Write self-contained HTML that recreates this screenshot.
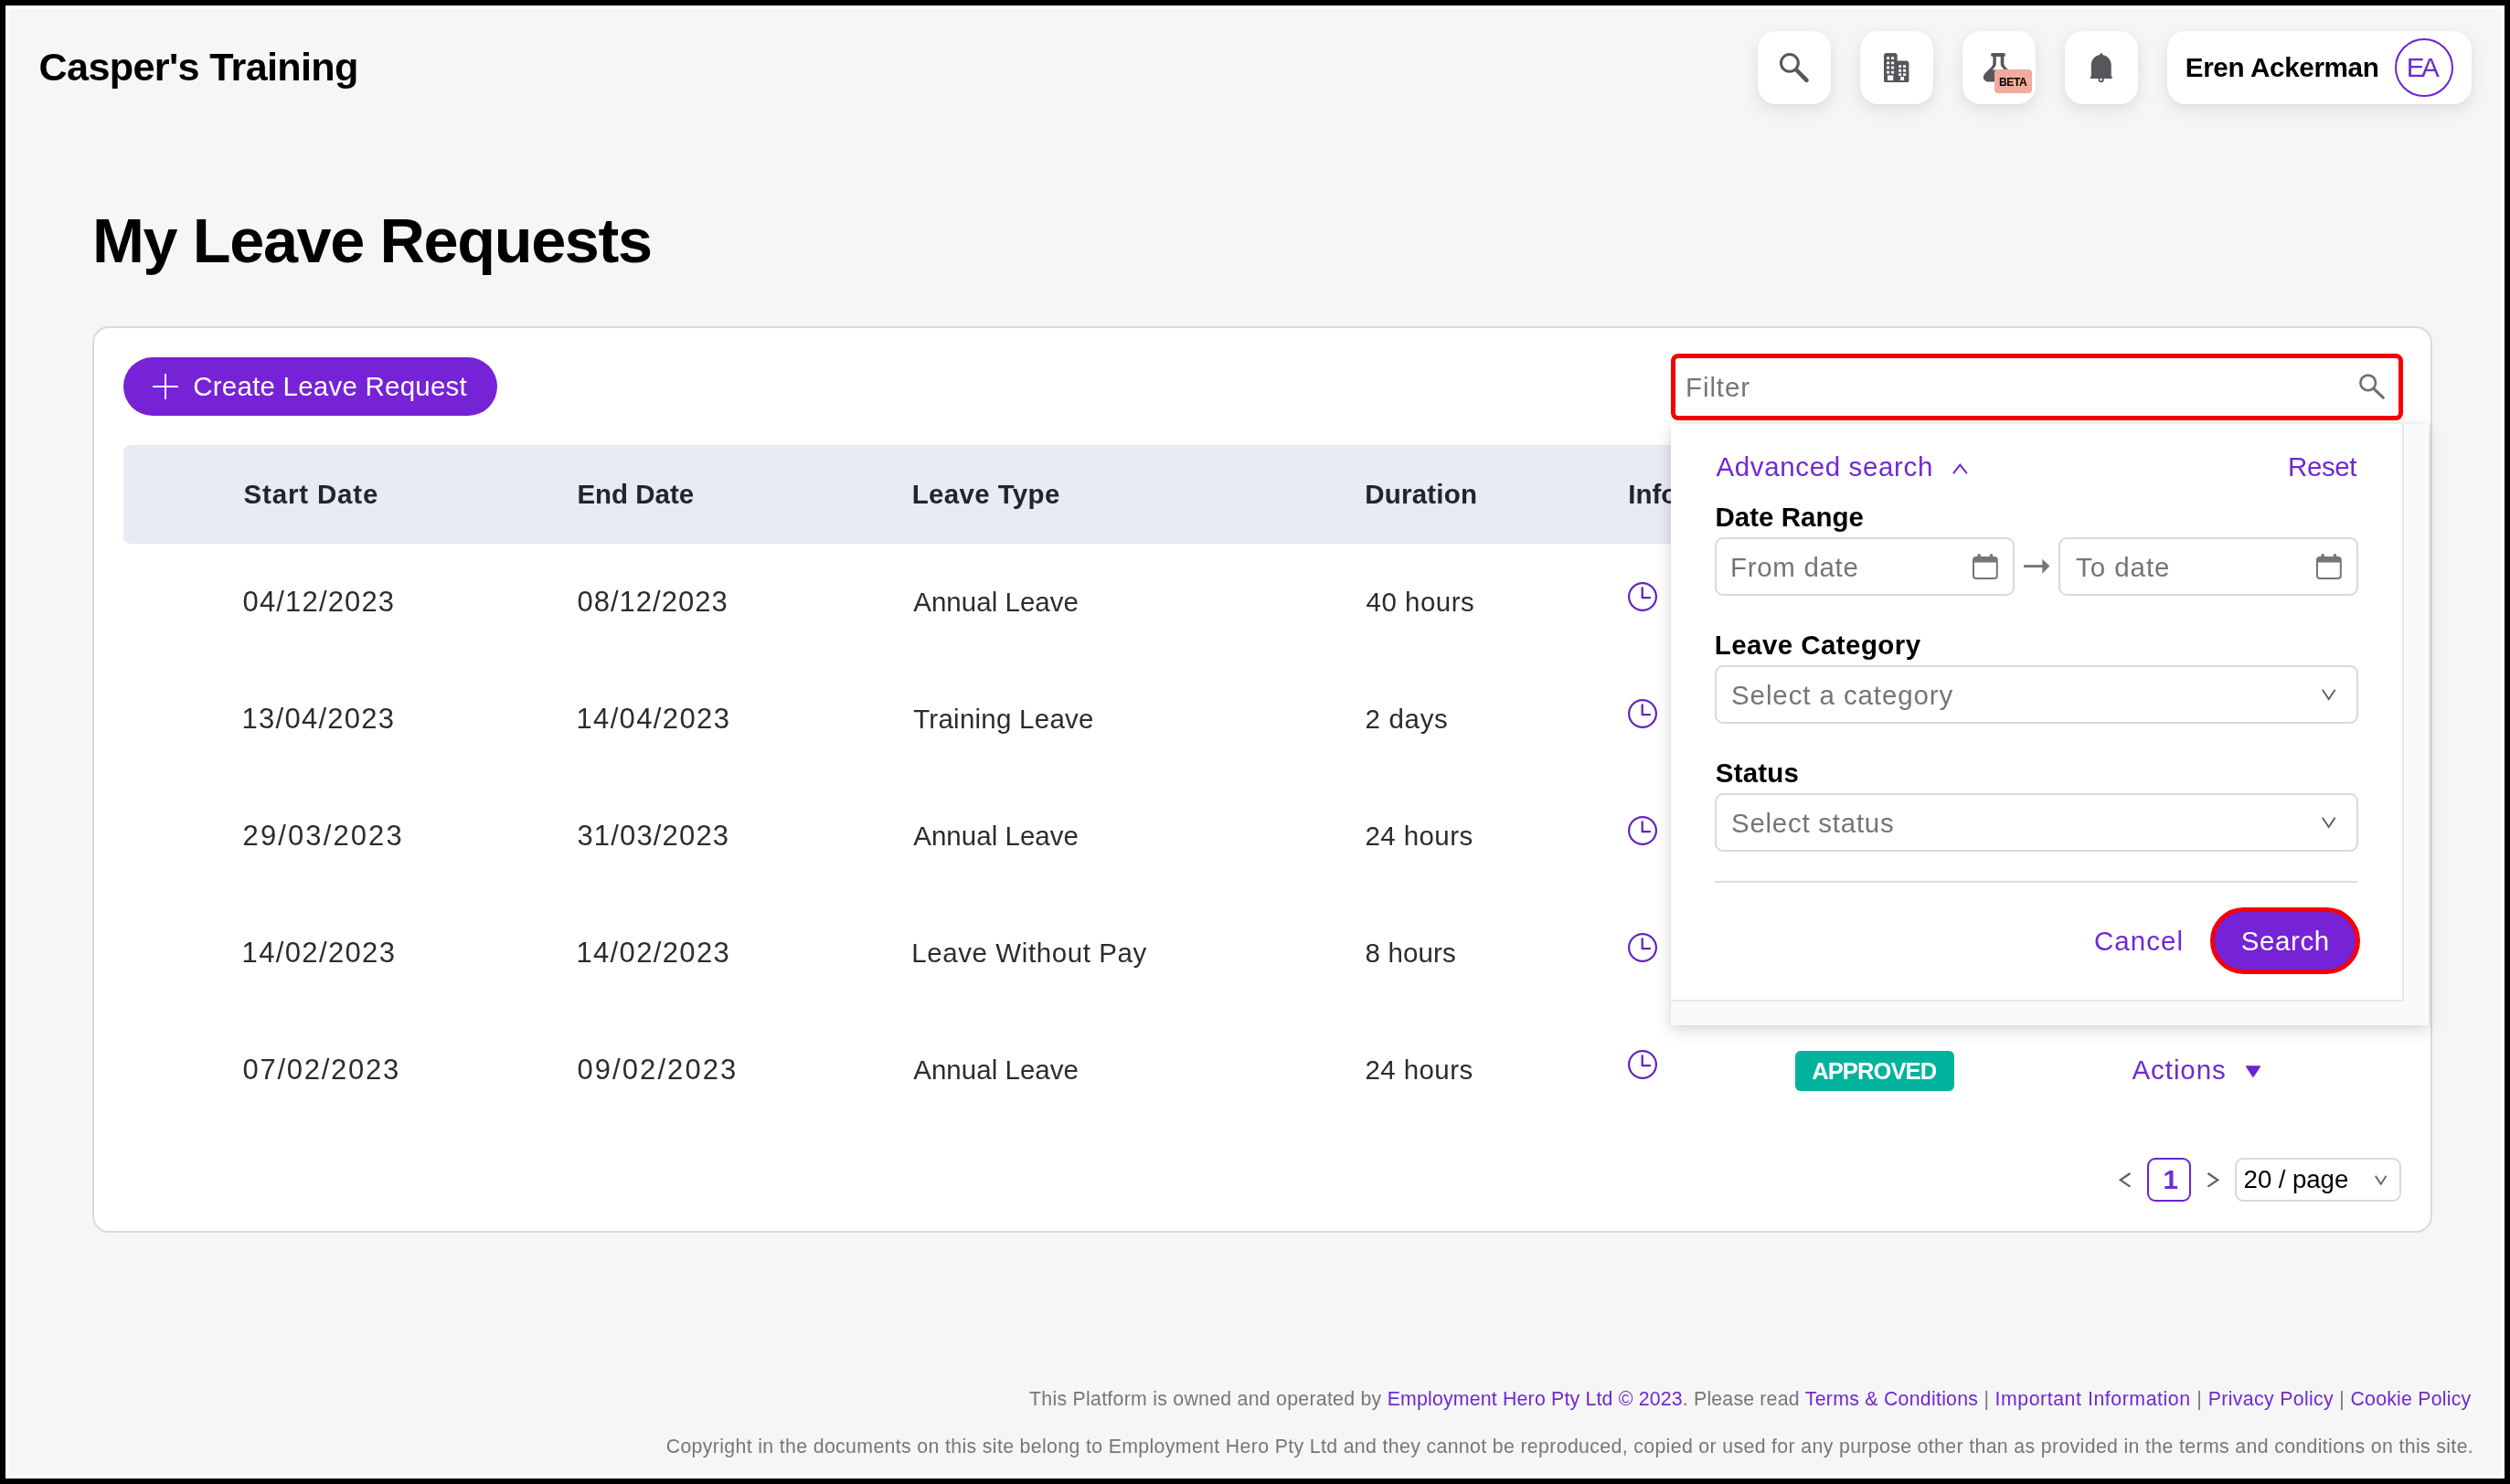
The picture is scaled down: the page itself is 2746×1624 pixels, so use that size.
<!DOCTYPE html>
<html lang="en">
<head>
<meta charset="utf-8">
<title>My Leave Requests</title>
<style>
*{box-sizing:border-box;margin:0;padding:0}
html,body{width:2746px;height:1624px;overflow:hidden;background:#000}
body{position:relative;font-family:"Liberation Sans",Arial,sans-serif;color:#000}
.frame{position:absolute;left:6px;top:6px;width:2734px;height:1612px;background:#fff}
.page{position:absolute;left:10px;top:10px;width:2726px;height:1604px;background:#f6f6f6}
.abs,.layer{position:absolute}
.layer{left:0;top:0;width:0;height:0}
header.layer,main.layer,footer.layer{will-change:transform}
.t{position:absolute;white-space:nowrap;line-height:1;font-weight:400;margin:0;font-family:"Liberation Sans",Arial,sans-serif}
a{text-decoration:none}
svg{position:absolute;overflow:visible}
.hbtn{position:absolute;top:34px;width:80px;height:80px;border-radius:20px;background:#fff;box-shadow:0 6px 18px rgba(0,0,0,.10),0 1px 3px rgba(0,0,0,.04)}
.card{position:absolute;left:101px;top:357px;width:2560px;height:992px;background:#fff;border:2px solid #d8dadd;border-radius:18px}
.thead{position:absolute;left:135px;top:487px;width:2491px;height:108px;background:#e7ebf2;border-radius:8px}
.pill{position:absolute;border-radius:999px;background:#7622d7}
.inp{position:absolute;background:#fff;border:2px solid #d8d9de;border-radius:9px}
</style>
</head>
<body>
<div class="frame"></div>
<div class="page"></div>

<header class="layer">
  <div class="t" style="left:42.60px;top:52.20px;font-size:43.2px;letter-spacing:-0.681px;color:#000;font-weight:700;">Casper's Training</div>
  <nav class="layer">
    <button class="hbtn" style="left:1923px;border:0" aria-label="Search"></button>
    <svg style="left:1947px;top:58px" width="32" height="32" viewBox="0 0 32 32"><circle cx="10.9" cy="10.9" r="9.4" fill="none" stroke="#56575b" stroke-width="3"/><line x1="18.8" y1="19" x2="29.5" y2="29.8" stroke="#56575b" stroke-width="4.6" stroke-linecap="round"/></svg>
    <button class="hbtn" style="left:2035px;border:0" aria-label="Organisation"></button>
    <svg style="left:2061px;top:58px" width="28" height="32" viewBox="0 0 28 32"><path fill="#56575b" fill-rule="evenodd" d="M3 0H11.7A3 3 0 0 1 14.7 3V8.5H24.4A3 3 0 0 1 27.4 11.500V30.500A1.500 1.500 0 0 1 25.900 32H1.500A1.500 1.500 0 0 1 0 30.500V3A3 3 0 0 1 3 0Z
M3.100 4.300h3v2.800h-3z M8.100 4.300h3v2.800h-3z M3.100 9.400h3v2.800h-3z M8.100 9.400h3v2.800h-3z M3.100 14.600h3v2.800h-3z M8.100 14.600h3v2.800h-3z M3.100 19.700h3v2.800h-3z M8.100 19.700h3v2.800h-3z M4 24.400h6.200v5.500h-6.200z
M16.200 13.300h2.900v2.800h-2.900z M21.100 13.300h3v2.800h-3z M16.200 17.800h2.900v2.900h-2.900z M21.100 17.800h3v2.900h-3z M16.200 22.200h2.900v2.900h-2.900z M21.100 22.200h3v2.900h-3z M18.100 26h4v4h-4z"/></svg>
    <button class="hbtn" style="left:2147px;border:0" aria-label="Beta features"></button>
    <svg style="left:2170px;top:58px" width="32" height="32" viewBox="0 0 32 32"><path fill="#56575b" d="M10.050 0H21.950A2.050 2.050 0 0 1 21.950 4.100H22.300V11C22.300 13.500 23.500 14.800 25.500 16.800L31 22.200C33.500 24.800 33.200 28 31.500 29.800C30.300 31.100 28.800 31.600 27 31.600H5.700C3.900 31.600 2.400 31.100 1.200 29.800C-0.500 28 -0.800 24.800 1.700 22.200L7.200 16.800C9.200 14.800 10.400 13.500 10.400 11V4.100H10.050A2.050 2.050 0 0 1 10.050 0Z"/><path fill="#fff" d="M13.800 4.100H18.700V11.500C18.700 14 20 15.600 22 17.500L23 18.400H9.700L10.600 17.500C12.600 15.600 13.800 14 13.800 11.500Z"/></svg>
    <div class="abs" style="left:2182px;top:76px;width:41px;height:26px;border-radius:4px;background:#f1ab9b"></div>
    <span class="t" style="left:2186.90px;top:83.80px;font-size:12.1px;letter-spacing:-0.363px;color:#000;font-weight:700;">BETA</span>
    <button class="hbtn" style="left:2259px;border:0" aria-label="Notifications"></button>
    <svg style="left:2287px;top:58px" width="24" height="32" viewBox="0 0 24 32"><circle cx="11.700" cy="29.100" r="2.300" fill="#fff" stroke="#56575b" stroke-width="1.700"/><path fill="#56575b" d="M0.800 25.600V13A10.950 10.950 0 0 1 22.700 13V25.600H22.800A1.150 1.150 0 0 1 22.800 27.900H0.900A1.150 1.150 0 0 1 0.900 25.600Z"/><path fill="#56575b" d="M9.300 3.200L11 0.500Q11.750 -0.300 12.500 0.500L14.200 3.200Z"/></svg>
    <div class="abs" style="left:2371px;top:34px;width:333px;height:80px;border-radius:20px;background:#fff;box-shadow:0 6px 18px rgba(0,0,0,.10),0 1px 3px rgba(0,0,0,.04)"></div>
    <span class="t" style="left:2390.80px;top:58.90px;font-size:29.7px;letter-spacing:-0.390px;color:#000;font-weight:700;">Eren Ackerman</span>
    <div class="abs" style="left:2620px;top:42px;width:64px;height:64px;border-radius:50%;border:2.500px solid #6a23cf"></div>
    <span class="t" style="left:2632.80px;top:58.90px;font-size:29.7px;letter-spacing:-3.601px;color:#7029d2;">EA</span>
  </nav>
</header>

<main class="layer">
  <h1 class="t" style="left:100.90px;top:229.20px;font-size:68.4px;letter-spacing:-1.359px;color:#000;font-weight:700;">My Leave Requests</h1>
  <section class="card"></section>

  <div class="pill" style="left:135px;top:391px;width:409px;height:64px"></div>
  <svg style="left:167px;top:409px" width="28" height="28" viewBox="0 0 28 28"><path d="M14 0V28M0 14H28" stroke="#fff" stroke-width="2" fill="none"/></svg>
  <span class="t" style="left:211.30px;top:408.40px;font-size:29.5px;letter-spacing:0.222px;color:#fff;">Create Leave Request</span>

  <div class="layer" role="table">
    <div class="thead"></div>
    <div class="layer" role="row">
    <span class="t" style="left:266.50px;top:525.90px;font-size:29.5px;letter-spacing:0.840px;color:#23252a;font-weight:700;">Start Date</span>
<span class="t" style="left:631.40px;top:525.90px;font-size:29.5px;letter-spacing:-0.021px;color:#23252a;font-weight:700;">End Date</span>
<span class="t" style="left:997.70px;top:525.90px;font-size:29.5px;letter-spacing:0.356px;color:#23252a;font-weight:700;">Leave Type</span>
<span class="t" style="left:1493.20px;top:525.90px;font-size:29.5px;letter-spacing:0.221px;color:#23252a;font-weight:700;">Duration</span>
<span class="t" style="left:1781.20px;top:525.90px;font-size:29.5px;letter-spacing:0.000px;color:#23252a;font-weight:700;">Info</span>
    </div>
    <div class="layer" role="row">
    <span class="t" style="left:265.60px;top:643.30px;font-size:31px;letter-spacing:1.143px;color:#2a2c30;">04/12/2023</span>
<span class="t" style="left:631.40px;top:643.30px;font-size:31px;letter-spacing:1.021px;color:#2a2c30;">08/12/2023</span>
<span class="t" style="left:999.20px;top:644.30px;font-size:29.5px;letter-spacing:0.034px;color:#2a2c30;">Annual Leave</span>
<span class="t" style="left:1494.50px;top:644.30px;font-size:29.5px;letter-spacing:0.507px;color:#2a2c30;">40 hours</span>
    <svg class="clk" style="left:1781px;top:637px" width="32" height="32" viewBox="0 0 32 32"><circle cx="16" cy="16" r="14.900" fill="none" stroke="#6424bd" stroke-width="2.200"/><path d="M15.700 6.300V17.200H24" fill="none" stroke="#6424bd" stroke-width="2.300" stroke-linecap="round" stroke-linejoin="round"/></svg>
    </div>
    <div class="layer" role="row">
    <span class="t" style="left:264.60px;top:771.30px;font-size:31px;letter-spacing:1.254px;color:#2a2c30;">13/04/2023</span>
<span class="t" style="left:630.40px;top:771.30px;font-size:31px;letter-spacing:1.377px;color:#2a2c30;">14/04/2023</span>
<span class="t" style="left:999.20px;top:772.30px;font-size:29.5px;letter-spacing:0.250px;color:#2a2c30;">Training Leave</span>
<span class="t" style="left:1493.50px;top:772.30px;font-size:29.5px;letter-spacing:0.687px;color:#2a2c30;">2 days</span>
    <svg class="clk" style="left:1781px;top:765px" width="32" height="32" viewBox="0 0 32 32"><circle cx="16" cy="16" r="14.900" fill="none" stroke="#6424bd" stroke-width="2.200"/><path d="M15.700 6.300V17.200H24" fill="none" stroke="#6424bd" stroke-width="2.300" stroke-linecap="round" stroke-linejoin="round"/></svg>
    </div>
    <div class="layer" role="row">
    <span class="t" style="left:265.60px;top:899.30px;font-size:31px;letter-spacing:2.099px;color:#2a2c30;">29/03/2023</span>
<span class="t" style="left:631.40px;top:899.30px;font-size:31px;letter-spacing:1.165px;color:#2a2c30;">31/03/2023</span>
<span class="t" style="left:999.20px;top:900.30px;font-size:29.5px;letter-spacing:0.034px;color:#2a2c30;">Annual Leave</span>
<span class="t" style="left:1493.50px;top:900.30px;font-size:29.5px;letter-spacing:0.407px;color:#2a2c30;">24 hours</span>
    <svg class="clk" style="left:1781px;top:893px" width="32" height="32" viewBox="0 0 32 32"><circle cx="16" cy="16" r="14.900" fill="none" stroke="#6424bd" stroke-width="2.200"/><path d="M15.700 6.300V17.200H24" fill="none" stroke="#6424bd" stroke-width="2.300" stroke-linecap="round" stroke-linejoin="round"/></svg>
    </div>
    <div class="layer" role="row">
    <span class="t" style="left:264.60px;top:1027.30px;font-size:31px;letter-spacing:1.354px;color:#2a2c30;">14/02/2023</span>
<span class="t" style="left:630.40px;top:1027.30px;font-size:31px;letter-spacing:1.354px;color:#2a2c30;">14/02/2023</span>
<span class="t" style="left:997.20px;top:1028.30px;font-size:29.5px;letter-spacing:0.590px;color:#2a2c30;">Leave Without Pay</span>
<span class="t" style="left:1493.50px;top:1028.30px;font-size:29.5px;letter-spacing:0.142px;color:#2a2c30;">8 hours</span>
    <svg class="clk" style="left:1781px;top:1021px" width="32" height="32" viewBox="0 0 32 32"><circle cx="16" cy="16" r="14.900" fill="none" stroke="#6424bd" stroke-width="2.200"/><path d="M15.700 6.300V17.200H24" fill="none" stroke="#6424bd" stroke-width="2.300" stroke-linecap="round" stroke-linejoin="round"/></svg>
    </div>
    <div class="layer" role="row">
    <span class="t" style="left:265.60px;top:1155.30px;font-size:31px;letter-spacing:1.710px;color:#2a2c30;">07/02/2023</span>
<span class="t" style="left:631.40px;top:1155.30px;font-size:31px;letter-spacing:2.088px;color:#2a2c30;">09/02/2023</span>
<span class="t" style="left:999.20px;top:1156.30px;font-size:29.5px;letter-spacing:0.034px;color:#2a2c30;">Annual Leave</span>
<span class="t" style="left:1493.50px;top:1156.30px;font-size:29.5px;letter-spacing:0.407px;color:#2a2c30;">24 hours</span>
    <svg class="clk" style="left:1781px;top:1149px" width="32" height="32" viewBox="0 0 32 32"><circle cx="16" cy="16" r="14.900" fill="none" stroke="#6424bd" stroke-width="2.200"/><path d="M15.700 6.300V17.200H24" fill="none" stroke="#6424bd" stroke-width="2.300" stroke-linecap="round" stroke-linejoin="round"/></svg>
    <div class="abs" style="left:1964px;top:1150px;width:174px;height:44px;border-radius:6px;background:#01b39c"></div>
    <span class="t" style="left:1982.20px;top:1160.00px;font-size:25.6px;letter-spacing:-0.951px;color:#fff;font-weight:700;">APPROVED</span>
    <span class="t" style="left:2332.50px;top:1156.00px;font-size:29.5px;letter-spacing:0.918px;color:#7029d2;">Actions</span>
    <svg style="left:2456px;top:1166px" width="18" height="13" viewBox="0 0 18 13"><path d="M1.800 1H16.200L9 12Z" fill="#6a22d0" stroke="#6a22d0" stroke-width="1.600" stroke-linejoin="round"/></svg>
    </div>
  </div>

  <div class="layer" aria-label="Pagination">
    <svg style="left:2318px;top:1283px" width="14" height="17" viewBox="0 0 14 17"><path d="M12.500 1L1.800 8.300L12.500 15.600" fill="none" stroke="#5d5f64" stroke-width="2.200"/></svg>
    <div class="abs" style="left:2349px;top:1267px;width:48px;height:48px;border-radius:9px;border:2px solid #6a23cf;background:#fff"></div>
    <span class="t" style="left:2366.40px;top:1275.50px;font-size:29.5px;letter-spacing:0.000px;color:#7029d2;font-weight:700;">1</span>
    <svg style="left:2414px;top:1283px" width="14" height="17" viewBox="0 0 14 17"><path d="M1.500 1L12.200 8.300L1.500 15.600" fill="none" stroke="#5d5f64" stroke-width="2.200"/></svg>
    <div class="inp" style="left:2445px;top:1267px;width:182px;height:48px;border-color:#d9d9d9"></div>
    <span class="t" style="left:2454.60px;top:1277.20px;font-size:27.7px;letter-spacing:-0.096px;color:#000;">20 / page</span>
    <svg style="left:2598px;top:1286px" width="14" height="11" viewBox="0 0 14 11"><path d="M0.800 0.800L6.700 9.800L12.600 0.800" fill="none" stroke="#5d5f64" stroke-width="1.800"/></svg>
  </div>

  <!-- filter + advanced search dropdown -->
  <div class="layer">
    <div class="abs" style="left:1828px;top:464px;width:829px;height:658px;background:#fafafa;border-radius:4px 0 0 0;box-shadow:0 5px 18px rgba(0,0,0,.16),0 0 4px rgba(0,0,0,.05)"></div>
    <div class="abs" style="left:1828px;top:464px;width:802px;height:632px;background:#fff;border-radius:4px 0 0 0;border-right:2px solid #e8e8ea;border-bottom:2px solid #e8e8ea"></div>
    <div class="abs" style="left:2658px;top:464px;width:3px;height:660px;background:#d2d4d9;opacity:.55"></div>

    <div class="abs" style="left:1828px;top:387px;width:801px;height:73px;border:5px solid #f40000;border-radius:8px;background:#fff"></div>
    <span class="t" style="left:1844.10px;top:408.70px;font-size:29.5px;letter-spacing:0.874px;color:#737579;">Filter</span>
    <svg style="left:2581px;top:409px" width="28" height="28" viewBox="0 0 28 28"><circle cx="9.700" cy="9.900" r="8.300" fill="none" stroke="#6e7075" stroke-width="2.600"/><line x1="16.200" y1="16.600" x2="26.300" y2="26.200" stroke="#6e7075" stroke-width="3.200" stroke-linecap="round"/></svg>

    <span class="t" style="left:1877.40px;top:496.20px;font-size:29.5px;letter-spacing:0.647px;color:#7029d2;">Advanced search</span>
    <svg style="left:2136px;top:507px" width="17" height="12" viewBox="0 0 17 12"><path d="M1 11.200L8.400 1.600L15.800 11.200" fill="none" stroke="#7029d2" stroke-width="2"/></svg>
    <span class="t" style="left:2503.10px;top:496.20px;font-size:29.5px;letter-spacing:-0.417px;color:#7029d2;">Reset</span>
    <span class="t" style="left:1876.40px;top:551.20px;font-size:29.5px;letter-spacing:0.035px;color:#000;font-weight:700;">Date Range</span>
    <div class="inp" style="left:1876px;top:588px;width:328px;height:64px"></div>
    <span class="t" style="left:1893.00px;top:605.80px;font-size:29.5px;letter-spacing:0.684px;color:#737579;">From date</span>
    <svg class="cal" style="left:2158px;top:606px" width="28" height="28" viewBox="0 0 28 28"><rect x="1" y="3.900" width="25.800" height="23.100" rx="3" fill="none" stroke="#74767b" stroke-width="2"/><path d="M1 9.600V7A3 3 0 0 1 4 3.900H23.800A3 3 0 0 1 26.800 7V9.600Z" fill="#74767b"/><path d="M7.100 1.700V5M20.500 1.700V5" stroke="#74767b" stroke-width="3.600" stroke-linecap="round"/></svg>
    <svg style="left:2214px;top:611px" width="29" height="18" viewBox="0 0 29 18"><path d="M0 8.600H21" stroke="#74767b" stroke-width="2.900"/><path d="M20.300 0.800L28.400 8.600L20.300 16.800Z" fill="#74767b"/></svg>
    <div class="inp" style="left:2252px;top:588px;width:328px;height:64px"></div>
    <span class="t" style="left:2271.00px;top:605.80px;font-size:29.5px;letter-spacing:0.956px;color:#737579;">To date</span>
    <svg class="cal" style="left:2534px;top:606px" width="28" height="28" viewBox="0 0 28 28"><rect x="1" y="3.900" width="25.800" height="23.100" rx="3" fill="none" stroke="#74767b" stroke-width="2"/><path d="M1 9.600V7A3 3 0 0 1 4 3.900H23.800A3 3 0 0 1 26.800 7V9.600Z" fill="#74767b"/><path d="M7.100 1.700V5M20.500 1.700V5" stroke="#74767b" stroke-width="3.600" stroke-linecap="round"/></svg>

    <span class="t" style="left:1875.80px;top:690.60px;font-size:29.5px;letter-spacing:0.431px;color:#000;font-weight:700;">Leave Category</span>
    <div class="inp" style="left:1876px;top:728px;width:704px;height:64px"></div>
    <span class="t" style="left:1894.00px;top:745.80px;font-size:29.5px;letter-spacing:0.901px;color:#737579;">Select a category</span>
    <svg style="left:2540px;top:754px" width="16" height="13" viewBox="0 0 16 13"><path d="M0.800 0.800L7.700 11L14.600 0.800" fill="none" stroke="#5d5f64" stroke-width="1.900"/></svg>

    <span class="t" style="left:1876.80px;top:830.70px;font-size:29.5px;letter-spacing:0.170px;color:#000;font-weight:700;">Status</span>
    <div class="inp" style="left:1876px;top:868px;width:704px;height:64px"></div>
    <span class="t" style="left:1894.00px;top:885.70px;font-size:29.5px;letter-spacing:0.738px;color:#737579;">Select status</span>
    <svg style="left:2540px;top:894px" width="16" height="13" viewBox="0 0 16 13"><path d="M0.800 0.800L7.700 11L14.600 0.800" fill="none" stroke="#5d5f64" stroke-width="1.900"/></svg>

    <div class="abs" style="left:1876px;top:964px;width:704px;height:2px;background:#dcdee3"></div>
    <span class="t" style="left:2291.00px;top:1014.90px;font-size:29.5px;letter-spacing:1.025px;color:#7029d2;">Cancel</span>
    <div class="pill" style="left:2418px;top:993px;width:164px;height:73px;border:5px solid #f60008"></div>
    <span class="t" style="left:2451.80px;top:1015.00px;font-size:29.5px;letter-spacing:0.587px;color:#fff;">Search</span>
  </div>
</main>

<footer class="layer">
  <p class="t" style="left:1126.10px;top:1521.20px;font-size:21.3px;letter-spacing:0.292px;color:#75777b;"><span style="letter-spacing:0.267px">This Platform is owned and operated by </span><span style="letter-spacing:0.185px"><a style="color:#7029d2">Employment Hero Pty Ltd © 2023</a>. Please read </span><span style="letter-spacing:0.266px"><a style="color:#7029d2">Terms &amp; Conditions</a> | </span><span style="letter-spacing:0.563px"><a style="color:#7029d2">Important Information</a> | </span><span style="letter-spacing:0.341px"><a style="color:#7029d2">Privacy Policy</a> | </span><span style="letter-spacing:0.232px"><a style="color:#7029d2">Cookie Policy</a></span></p>
  <p class="t" style="left:728.70px;top:1572.80px;font-size:21.3px;letter-spacing:0.351px;color:#75777b;">Copyright in the documents on this site belong to Employment Hero Pty Ltd and they cannot be reproduced, copied or used for any purpose other than as provided in the terms and conditions on this site.</p>
</footer>
</body>
</html>
